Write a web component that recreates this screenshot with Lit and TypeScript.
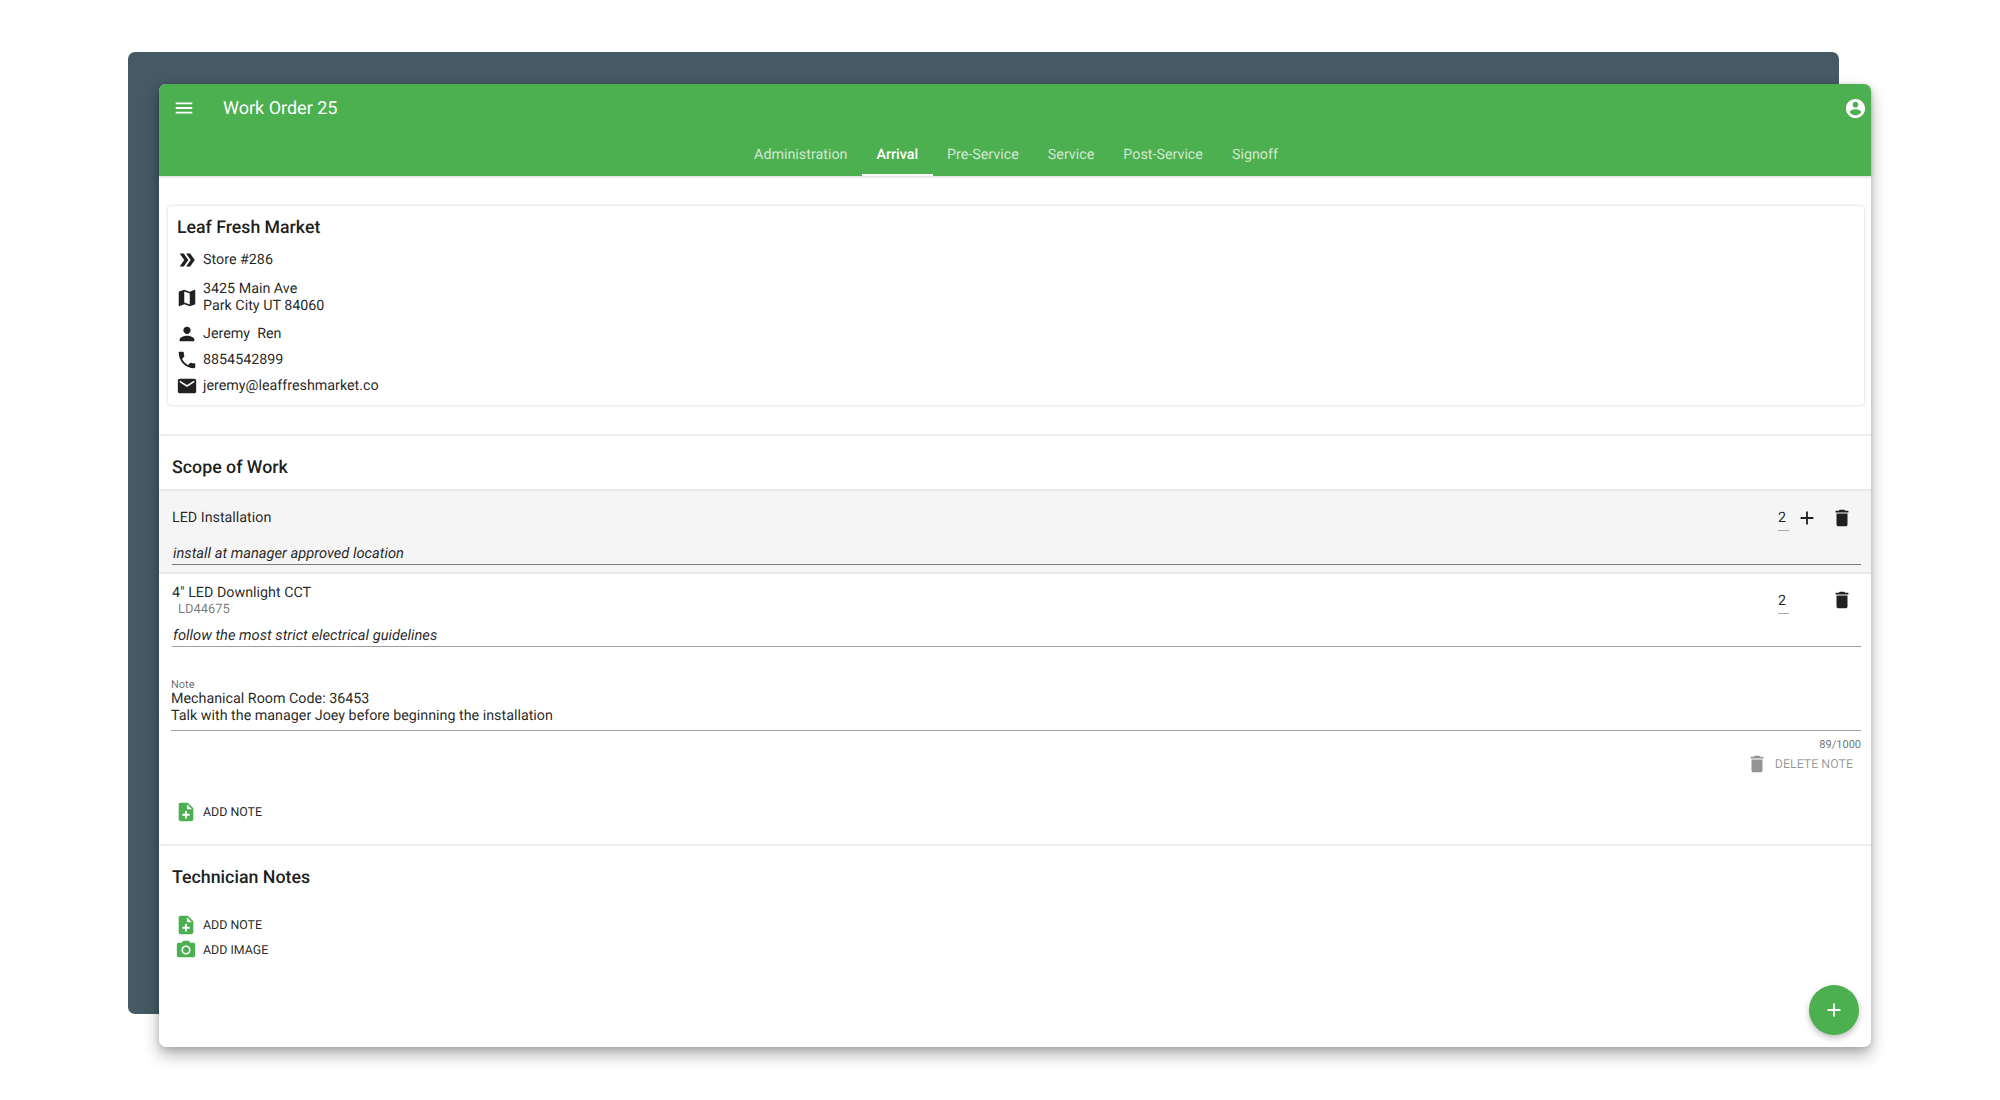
import { LitElement, html, css, svg } from "lit";
import { customElement } from "lit/decorators.js";

const icon = (d: unknown, cls = "ic", box = "0 0 24 24") => html`<svg class=${cls} viewBox=${box} aria-hidden="true">${d}</svg>`;
const P = {
  menu: svg`<path d="M3 18h18v-2H3v2zm0-5h18v-2H3v2zm0-7v2h18V6H3z"/>`,
  account: svg`<path d="M12 2C6.48 2 2 6.48 2 12s4.48 10 10 10 10-4.48 10-10S17.52 2 12 2zm0 3c1.66 0 3 1.34 3 3s-1.34 3-3 3-3-1.34-3-3 1.34-3 3-3zm0 14.2c-2.5 0-4.71-1.28-6-3.22.03-1.99 4-3.08 6-3.08 1.99 0 5.97 1.09 6 3.08-1.29 1.94-3.5 3.22-6 3.22z"/>`,
  chevrons: svg`<path d="M15.5 5H11l5 7-5 7h4.5l5-7z"/><path d="M8.5 5H4l5 7-5 7h4.5l5-7z"/>`,
  map: svg`<path d="M20.5 3l-.16.03L15 5.1 9 3 3.36 4.9c-.21.07-.36.25-.36.48V20.5c0 .28.22.5.5.5l.16-.03L9 18.9l6 2.1 5.64-1.9c.21-.07.36-.25.36-.48V3.5c0-.28-.22-.5-.5-.5zM15 19l-6-2.11V5l6 2.11V19z"/>`,
  person: svg`<path d="M12 12c2.21 0 4-1.79 4-4s-1.79-4-4-4-4 1.79-4 4 1.79 4 4 4zm0 2c-2.67 0-8 1.34-8 4v2h16v-2c0-2.66-5.33-4-8-4z"/>`,
  phone: svg`<path d="M6.62 10.79c1.44 2.83 3.76 5.14 6.59 6.59l2.2-2.2c.27-.27.67-.36 1.02-.24 1.12.37 2.33.57 3.57.57.55 0 1 .45 1 1V20c0 .55-.45 1-1 1-9.39 0-17-7.61-17-17 0-.55.45-1 1-1h3.5c.55 0 1 .45 1 1 0 1.25.2 2.45.57 3.57.11.35.03.74-.25 1.02l-2.2 2.2z"/>`,
  mail: svg`<path d="M20 4H4c-1.1 0-1.99.9-1.99 2L2 18c0 1.1.9 2 2 2h16c1.1 0 2-.9 2-2V6c0-1.1-.9-2-2-2zm0 4l-8 5-8-5V6l8 5 8-5v2z"/>`,
  plus: svg`<path d="M19 13h-6v6h-2v-6H5v-2h6V5h2v6h6v2z"/>`,
  trash: svg`<path d="M6 19c0 1.1.9 2 2 2h8c1.1 0 2-.9 2-2V7H6v12zM19 4h-3.5l-1-1h-5l-1 1H5v2h14V4z"/>`,
  noteAdd: svg`<path d="M14 2H6c-1.1 0-1.99.9-1.99 2L4 20c0 1.1.89 2 1.99 2H18c1.1 0 2-.9 2-2V8l-6-6zm2 14h-3v3h-2v-3H8v-2h3v-3h2v3h3v2zm-3-7V3.5L18.5 9H13z"/>`,
  camera: svg`<circle cx="12" cy="12" r="3.2"/><path d="M9 2L7.17 4H4c-1.1 0-2 .9-2 2v12c0 1.1.9 2 2 2h16c1.1 0 2-.9 2-2V6c0-1.1-.9-2-2-2h-3.17L15 2H9zm3 15c-2.76 0-5-2.24-5-5s2.24-5 5-5 5 2.24 5 5-2.24 5-5 5z"/>`,
};

@customElement("app-root")
export class AppRoot extends LitElement {
  static styles = css`
    :host { display: block; width: 2000px; height: 1100px; position: relative; overflow: hidden; background: #fff; font-family: Roboto, "Liberation Sans", sans-serif; color: rgba(0,0,0,.87); font-size: 14.3px; text-rendering: geometricPrecision; }
    .back { position: absolute; left: 128px; top: 52px; width: 1711px; height: 962px; background: #455a64; border-radius: 7px; }
    .win { position: absolute; left: 159px; top: 84px; width: 1712px; height: 963px; background: #fff; border-radius: 7px; display: flex; flex-direction: column; box-shadow: 0 8px 16px rgba(0,0,0,.3), 0 2px 6px rgba(0,0,0,.12); }
    header { background: #4caf50; color: #fff; border-radius: 7px 7px 0 0; height: 92px; flex: none; display: flex; flex-direction: column; box-shadow: 0 1px 3px rgba(0,0,0,.16); }
    .top { height: 48px; display: flex; align-items: center; padding: 0 4px 0 14px; }
    .top .ic { width: 22px; height: 22px; fill: #fff; }
    .title { font-size: 18px; margin-left: 28px; flex: 1; padding-top: 1px; }
    .top .acct { width: 23px; height: 23px; fill: #fff; }
    .tabs { display: flex; justify-content: center; height: 44px; padding-left: 2px; }
    .tab { padding: 3px 14.5px 0; display: flex; align-items: center; font-size: 14.3px; color: rgba(255,255,255,.75); border-bottom: 2px solid transparent; }
    .tab.on { color: #fff; font-weight: 500; border-bottom-color: #fff; }
    .content { flex: 1; display: flex; flex-direction: column; position: relative; }
    .card { margin: 30px 7px 0 9px; height: 199px; box-sizing: border-box; border-radius: 3px; padding: 9px 9px 0; box-shadow: 0 0 3px rgba(0,0,0,.22); }
    .card h2 { margin: 0; font-size: 17.7px; line-height: 26px; font-weight: 500; color: rgba(0,0,0,.9); }
    .info { display: flex; align-items: center; gap: 5px; min-height: 26px; line-height: 17px; }
    .info .ic { width: 22px; height: 22px; flex: none; fill: rgba(0,0,0,.87); margin-left: -1px; }
    .info.i0 { margin-top: 6px; height: 26px; }
    .info.i1 { margin-top: 8px; height: 34px; }
    .info.i2 { margin-top: 6px; }
    .sec { border-top: 2px solid #eee; margin-top: 29px; }
    h3 { margin: 0; font-size: 17.8px; line-height: 24px; font-weight: 500; color: rgba(0,0,0,.9); }
    .sec h3 { padding: 20px 13px 9px; }
    .job { border-top: 2px solid #e8e8e8; padding: 0 10px 0 13px; display: flex; flex-direction: column; }
    .job.grey { background: #f5f5f5; height: 81px; }
    .job.plain { height: 73px; }
    .jobhead { display: flex; align-items: flex-start; }
    .grey .jobhead { height: 52px; padding-top: 19px; box-sizing: border-box; }
    .plain .jobhead { height: 51px; padding-top: 11px; box-sizing: border-box; }
    .name { flex: 1; line-height: 17px; }
    .sku { font-size: 12.9px; line-height: 15px; color: rgba(0,0,0,.54); margin-left: 6px; }
    .qty { width: 11px; line-height: 17px; border-bottom: 1px solid #aaa; padding: 0 0 3px; }
    .add { width: 22px; height: 22px; fill: rgba(0,0,0,.87); margin: -3px 0 0 7px; }
    .del { width: 22px; height: 22px; fill: rgba(0,0,0,.87); margin: -3px 8px 0 13px; }
    .plain .qty { margin-top: 8px; }
    .plain .del { margin-top: 4px; margin-left: 42px; }
    .desc { font-style: italic; font-size: 14.7px; line-height: 20px; height: 22px; border-bottom: 1px solid rgba(0,0,0,.38); padding-left: 1px; box-sizing: border-box; }
    .grey .desc { border-bottom-color: rgba(0,0,0,.5); }
    .note { margin: 32px 10px 0 12px; }
    .note label { display: block; font-size: 11px; line-height: 12px; color: rgba(0,0,0,.6); }
    .note .val { line-height: 17px; padding-bottom: 5px; border-bottom: 1px solid rgba(0,0,0,.38); }
    .count { text-align: right; font-size: 11px; line-height: 12px; margin-top: 8px; color: rgba(0,0,0,.6); }
    .delnote { display: flex; justify-content: flex-end; align-items: center; gap: 7px; margin: 2px 18px 0 0; color: rgba(0,0,0,.42); font-size: 12.4px; height: 22px; }
    .delnote .ic { width: 22px; height: 22px; fill: rgba(0,0,0,.42); flex: none; }
    .act { display: flex; align-items: center; gap: 6px; font-size: 12.4px; padding-left: 16px; height: 25px; }
    .act .ic { width: 22px; height: 22px; fill: #4caf50; margin-top: -2px; flex: none; }
    .a1 { margin-top: 25px; }
    .sec2 { border-top: 2px solid #eee; margin-top: 19px; }
    .sec2 h3 { padding: 20px 13px 0; }
    .a2 { margin-top: 23px; }
    .fab { position: absolute; right: 12px; bottom: 12px; width: 50px; height: 50px; border-radius: 50%; background: #4caf50; display: flex; align-items: center; justify-content: center; box-shadow: 0 3px 6px rgba(0,0,0,.25); }
    .fab .ic { width: 22px; height: 22px; fill: #fff; }
  `;

  render() {
    return html`
      <div class="back"></div>
      <div class="win">
        <header>
          <div class="top">${icon(P.menu)}<span class="title">Work Order 25</span>${icon(P.account, "acct")}</div>
          <nav class="tabs">
            ${["Administration", "Arrival", "Pre-Service", "Service", "Post-Service", "Signoff"].map(
              (t) => html`<div class="tab ${t === "Arrival" ? "on" : ""}">${t}</div>`
            )}
          </nav>
        </header>
        <div class="content">
          <section class="card">
            <h2>Leaf Fresh Market</h2>
            <div class="info i0">${icon(P.chevrons)}<span>Store #286</span></div>
            <div class="info i1">${icon(P.map)}<span>3425 Main Ave<br />Park City UT 84060</span></div>
            <div class="info i2">${icon(P.person)}<span>Jeremy&nbsp; Ren</span></div>
            <div class="info">${icon(P.phone)}<span>8854542899</span></div>
            <div class="info">${icon(P.mail)}<span>jeremy@leaffreshmarket.co</span></div>
          </section>
          <section class="sec">
            <h3>Scope of Work</h3>
            <div class="job grey">
              <div class="jobhead">
                <div class="name">LED Installation</div>
                <div class="qty">2</div>
                ${icon(P.plus, "add")}${icon(P.trash, "del")}
              </div>
              <div class="desc">install at manager approved location</div>
            </div>
            <div class="job plain">
              <div class="jobhead">
                <div class="name">4" LED Downlight CCT<div class="sku">LD44675</div></div>
                <div class="qty">2</div>
                ${icon(P.trash, "del")}
              </div>
              <div class="desc">follow the most strict electrical guidelines</div>
            </div>
            <div class="note">
              <label>Note</label>
              <div class="val">Mechanical Room Code: 36453<br />Talk with the manager Joey before beginning the installation</div>
              <div class="count">89/1000</div>
            </div>
            <div class="delnote">${icon(P.trash)}<span>DELETE NOTE</span></div>
            <div class="act a1">${icon(P.noteAdd)}<span>ADD NOTE</span></div>
          </section>
          <section class="sec2">
            <h3>Technician Notes</h3>
            <div class="act a2">${icon(P.noteAdd)}<span>ADD NOTE</span></div>
            <div class="act">${icon(P.camera)}<span>ADD IMAGE</span></div>
          </section>
          <div class="fab">${icon(P.plus)}</div>
        </div>
      </div>
    `;
  }
}
